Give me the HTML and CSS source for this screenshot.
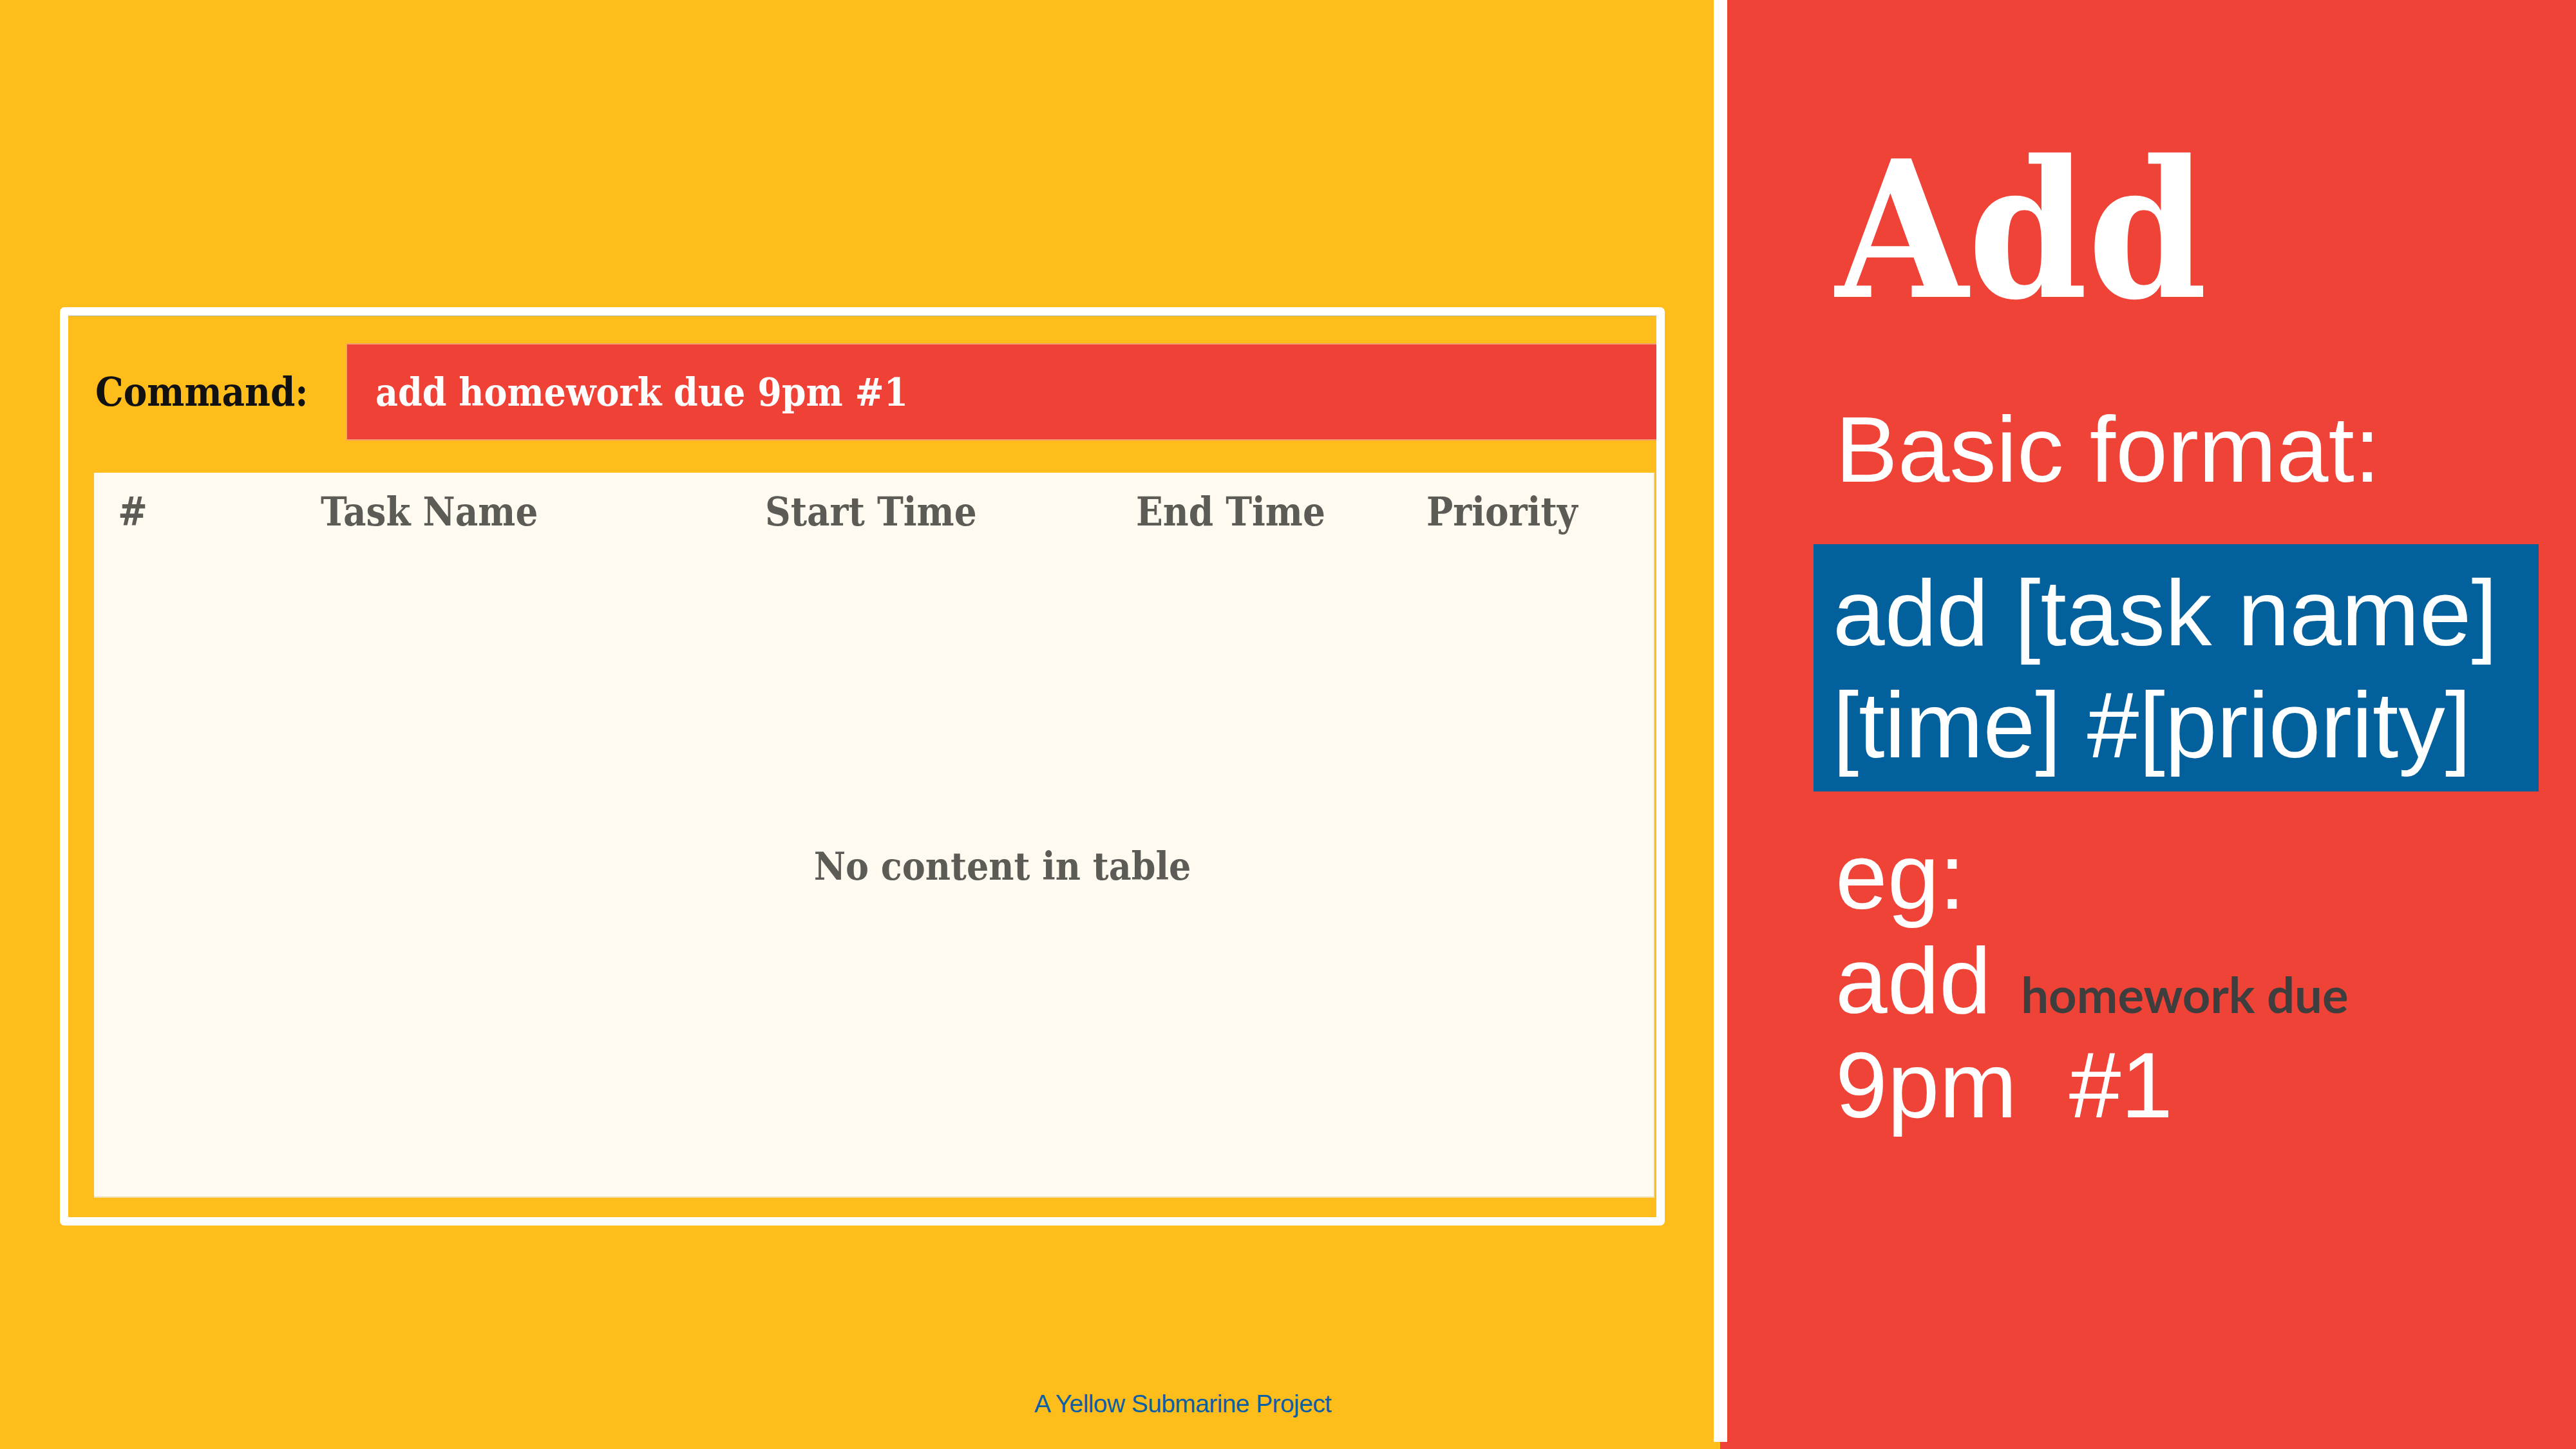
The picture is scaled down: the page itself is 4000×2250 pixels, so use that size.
FILE: index.html
```html
<!DOCTYPE html>
<html lang="en">
<head>
<meta charset="utf-8">
<title>Add - Yellow Submarine</title>
<link rel="stylesheet" href="styles.css">
</head>
<body>
<div class="stage">
  <section class="app-pane">
    <div class="frame">
      <div class="frame-inner">
        <div class="command-row">
          <div class="cmd-label">Command:</div>
          <div class="cmd-input">add homework due 9pm #1</div>
        </div>
        <div class="task-table">
          <div class="thead">
            <span class="col-num">#</span>
            <span>Task Name</span>
            <span>Start Time</span>
            <span>End Time</span>
            <span>Priority</span>
          </div>
          <div class="empty">No content in table</div>
        </div>
      </div>
    </div>
    <p class="credit">A Yellow Submarine Project</p>
  </section>
  <div class="divider"></div>
  <section class="help-pane">
    <h1 class="help-title">Add</h1>
    <p class="help-sub">Basic format:</p>
    <div class="format-box">add [task name]<br>[time] #[priority]</div>
    <p class="example">eg:<br>add <span class="example-arg">homework due</span><br>9pm&nbsp; #1</p>
  </section>
</div>
</body>
</html>
```

FILE: styles.css
```css
html, body {
  margin: 0;
  padding: 0;
}

body {
  width: 4000px;
  height: 2250px;
  overflow: hidden;
}

.stage {
  position: relative;
  display: flex;
  width: 4000px;
  height: 2250px;
}

.app-pane {
  width: 2671px;
  flex: none;
  box-sizing: border-box;
  padding: 477px 0 0 93px;
  background: #FEBD1A;
}

.frame {
  width: 2492px;
  height: 1426px;
  box-sizing: border-box;
  border: 13px solid #ffffff;
  border-radius: 7px;
  background: #FEBD1A;
}

.frame-inner {
  box-sizing: border-box;
  height: 100%;
  padding: 42px 0 30px 40px;
  border-top: 1px solid #b7b1a3;
  display: flex;
  flex-direction: column;
}

.command-row {
  display: flex;
  align-items: center;
  height: 151px;
  flex: none;
}

.cmd-label {
  width: 392px;
  flex: none;
  font-family: "DejaVu Serif", "Liberation Serif", serif;
  font-stretch: condensed;
  font-weight: 700;
  font-size: 61px;
  color: #111111;
  padding-left: 2px;
  box-sizing: border-box;
}

.cmd-input {
  flex: 1;
  height: 151px;
  box-sizing: border-box;
  display: flex;
  align-items: center;
  padding-left: 44px;
  background: #EF4136;
  border-top: 2px solid #F79B72;
  border-bottom: 2px solid #F79B72;
  border-left: 1px solid #F79B72;
  color: #ffffff;
  font-family: "DejaVu Serif", "Liberation Serif", serif;
  font-stretch: condensed;
  font-weight: 700;
  font-size: 60px;
}

.task-table {
  margin-top: 50px;
  margin-right: 3px;
  flex: 1;
  background: #FFFAF0;
  border-right: 1px solid #f6dfaa;
  border-bottom: 2px solid #f4dca6;
  font-family: "DejaVu Serif", "Liberation Serif", serif;
  font-stretch: condensed;
  font-weight: 700;
  color: #5d5b56;
}

.thead {
  display: grid;
  grid-template-columns: 310px 690px 576px 451px auto;
  padding: 26px 0 0 42px;
  font-size: 61px;
  line-height: 70px;
}

.col-num {
  margin-left: -5px;
}

.empty {
  margin-top: 480px;
  padding-left: 399px;
  text-align: center;
  font-size: 60px;
  line-height: 70px;
}

.credit {
  margin: 255px 0 0 1513px;
  font-family: "Liberation Sans", Arial, sans-serif;
  font-size: 39px;
  line-height: 44px;
  letter-spacing: -0.6px;
  color: #0B5FA5;
}

.divider {
  position: absolute;
  left: 2661px;
  top: 0;
  width: 21px;
  height: 2239px;
  background: #ffffff;
}

.help-pane {
  flex: 1;
  background: #EF4337;
  box-sizing: border-box;
  padding: 0 0 0 179px;
  color: #ffffff;
  font-family: "Liberation Sans", Arial, sans-serif;
}

.help-title {
  margin: 208px 0 0 0;
  font-family: "DejaVu Serif", "Liberation Serif", serif;
  font-stretch: condensed;
  font-weight: 700;
  font-size: 295px;
  line-height: 300px;
}

.help-sub {
  margin: 103px 0 0 0;
  font-size: 145px;
  line-height: 174px;
}

.format-box {
  margin: 60px 0 0 -34px;
  width: 1126px;
  box-sizing: border-box;
  padding: 20px 0 16px 30px;
  background: #02609D;
  font-size: 145px;
  line-height: 174px;
}

.example {
  margin: 51px 0 0 0;
  font-size: 145px;
  line-height: 162px;
}

.example-arg {
  font-family: Lato, "Open Sans", sans-serif;
  font-weight: 700;
  font-size: 76px;
  line-height: 76px;
  color: #3E3E3E;
  margin-left: 6px;
}
```
